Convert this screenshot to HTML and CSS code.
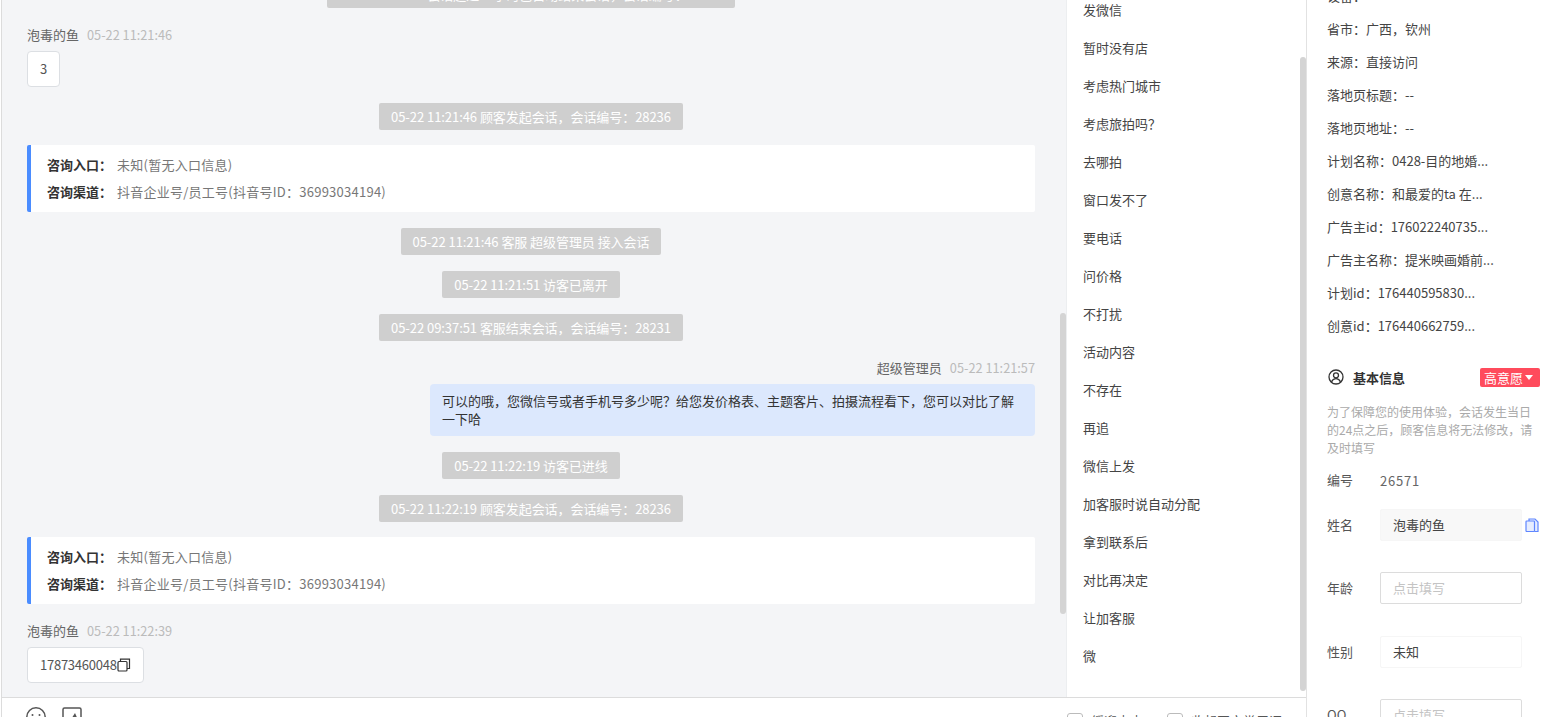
FILE: index.html
```html
<!DOCTYPE html>
<html lang="zh">
<head>
<meta charset="utf-8">
<title>客服会话</title>
<link rel="stylesheet" href="styles.css">
</head>
<body>
<div class="app">
  <main class="workspace">
    <div class="upper">
      <section class="chat">
        <div class="chat-flow">
          <div class="notice-row"><span class="chip">05-22 11:21:46 会话超过24小时已自动结束会话&#65292;会话编号&#65306;28236</span></div>
          <div class="msg">
            <div class="meta"><span class="who">泡毒的鱼</span><span class="when">05-22 11:21:46</span></div>
            <div class="bubble guest">3</div>
          </div>
          <div class="notice-row"><span class="chip">05-22 11:21:46 顾客发起会话&#65292;会话编号&#65306;28236</span></div>
          <div class="source">
            <p><b>咨询入口&#65306;</b><span class="val">未知(暂无入口信息)</span></p>
            <p><b>咨询渠道&#65306;</b><span class="val">抖音企业号/员工号(抖音号ID&#65306;36993034194)</span></p>
          </div>
          <div class="notice-row"><span class="chip">05-22 11:21:46 客服 超级管理员 接入会话</span></div>
          <div class="notice-row"><span class="chip">05-22 11:21:51 访客已离开</span></div>
          <div class="notice-row"><span class="chip">05-22 09:37:51 客服结束会话&#65292;会话编号&#65306;28231</span></div>
          <div class="msg mine">
            <div class="meta"><span class="who">超级管理员</span><span class="when">05-22 11:21:57</span></div>
            <div class="bubble agent">可以的哦&#65292;您微信号或者手机号多少呢&#65311;给您发价格表、主题客片、拍摄流程看下&#65292;您可以对比了解一下哈</div>
          </div>
          <div class="notice-row"><span class="chip">05-22 11:22:19 访客已进线</span></div>
          <div class="notice-row"><span class="chip">05-22 11:22:19 顾客发起会话&#65292;会话编号&#65306;28236</span></div>
          <div class="source">
            <p><b>咨询入口&#65306;</b><span class="val">未知(暂无入口信息)</span></p>
            <p><b>咨询渠道&#65306;</b><span class="val">抖音企业号/员工号(抖音号ID&#65306;36993034194)</span></p>
          </div>
          <div class="msg">
            <div class="meta"><span class="who">泡毒的鱼</span><span class="when">05-22 11:22:39</span></div>
            <div class="bubble guest phone">17873460048<svg class="copy-mini" viewBox="0 0 14 14" fill="none" stroke="#333" stroke-width="1.2"><rect x="1" y="3.5" width="9" height="9.5" rx="1"/><path d="M3.500 3.500V1.200h9v9.300H10"/></svg></div>
          </div>
        </div>
        <div class="thumb chat-thumb"></div>
      </section>
      <aside class="phrases">
        <ul class="phrase-list">
          <li>发微信</li><li>暂时没有店</li><li>考虑热门城市</li><li>考虑旅拍吗&#65311;</li><li>去哪拍</li><li>窗口发不了</li><li>要电话</li><li>问价格</li><li>不打扰</li><li>活动内容</li><li>不存在</li><li>再追</li><li>微信上发</li><li>加客服时说自动分配</li><li>拿到联系后</li><li>对比再决定</li><li>让加客服</li><li>微</li>
        </ul>
        <div class="thumb phrase-thumb"></div>
      </aside>
    </div>
    <footer class="composer">
      <div class="tools">
        <svg class="tool" viewBox="0 0 20 20" fill="none" stroke="#555" stroke-width="1.5"><circle cx="10" cy="10" r="9.200"/><circle cx="6.500" cy="8" r="1" fill="#555" stroke="none"/><circle cx="13.500" cy="8" r="1" fill="#555" stroke="none"/><path d="M5.500 12.500c2.500 3 6.500 3 9 0"/></svg>
        <svg class="tool" viewBox="0 0 20 20" fill="none" stroke="#555" stroke-width="1.5"><rect x="1" y="1" width="18" height="18" rx="1.500"/><path d="M4 15l4-5 1.500 1.500L13 6l4 9z" fill="#555" stroke="none"/></svg>
      </div>
      <div class="checks">
        <label class="check"><i></i>缓迎点击</label>
        <label class="check"><i></i>收起图文常用语</label>
      </div>
    </footer>
  </main>
  <aside class="profile">
    <div class="facts">
      <p>设备&#65306;</p>
      <p>省市&#65306;广西&#65292;钦州</p>
      <p>来源&#65306;直接访问</p>
      <p>落地页标题&#65306;--</p>
      <p>落地页地址&#65306;--</p>
      <p>计划名称&#65306;0428-目的地婚...</p>
      <p>创意名称&#65306;和最爱的ta 在...</p>
      <p>广告主id&#65306;176022240735...</p>
      <p>广告主名称&#65306;提米映画婚前...</p>
      <p>计划id&#65306;176440595830...</p>
      <p>创意id&#65306;176440662759...</p>
    </div>
    <div class="basic-head">
      <svg class="user-icon" viewBox="0 0 16 16" fill="none" stroke="#333" stroke-width="1.300"><circle cx="8" cy="8" r="7"/><circle cx="8" cy="6.300" r="2.500"/><path d="M3.500 13c1-2.400 2.600-3.300 4.500-3.300s3.500.9 4.500 3.300"/></svg>
      <strong>基本信息</strong>
      <span class="badge">高意愿<i class="caret"></i></span>
    </div>
    <p class="tip">为了保障您的使用体验&#65292;会话发生当日的24点之后&#65292;顾客信息将无法修改&#65292;请及时填写</p>
    <div class="field plain"><label>编号</label><span class="serial">26571</span></div>
    <div class="field name"><label>姓名</label><div class="box filled">泡毒的鱼</div>
      <svg class="copy" viewBox="0 0 14 14" fill="#e6edff" stroke="#5f86ff" stroke-width="1.200"><path d="M4 3V1h6l3 3v9.500H9.500"/><rect x="1" y="3" width="8.500" height="10.500" rx=".8"/></svg>
    </div>
    <div class="field"><label>年龄</label><div class="box empty">点击填写</div></div>
    <div class="field gender"><label>性别</label><div class="box soft">未知</div></div>
    <div class="field"><label>QQ</label><div class="box empty">点击填写</div></div>
  </aside>
</div>
</body>
</html>
```

FILE: styles.css
```css
* { box-sizing: border-box; }
html, body { margin: 0; height: 100%; overflow: hidden; }
body {
  font-family: "Noto Sans CJK SC", "Noto Sans", sans-serif;
  font-size: 13px;
  color: #333;
  background: #fff;
}
p, ul { margin: 0; padding: 0; }
.app { display: flex; height: 717px; }
.workspace {
  width: 1306px;
  margin-left: 1px;
  display: flex;
  flex-direction: column;
  border-left: 1px solid #dcdcdc;
  border-right: 1px solid #e2e2e2;
}
.upper { height: 697px; display: flex; overflow: hidden; }

.chat {
  position: relative;
  width: 1065px;
  background: #f4f5f7;
  border-right: 1px solid #eceef0;
  overflow: hidden;
}
.chat-flow {
  height: 697px;
  display: flex;
  flex-direction: column;
  justify-content: flex-end;
  padding: 0 31px 14px 25px;
}
.notice-row { display: flex; justify-content: center; flex-shrink: 0; margin-bottom: 16px; }
.notice-row + .msg, .source + .msg { margin-top: 2px; }
.notice-row + .source { margin-top: -1px; }
.chip {
  height: 27px;
  line-height: 27px;
  padding: 0 12px;
  background: #cfcfcf;
  color: #fff;
  font-size: 13px;
  letter-spacing: -.06px;
  border-radius: 2px;
  white-space: nowrap;
}
.msg { flex-shrink: 0; margin-bottom: 16px; display: flex; flex-direction: column; align-items: flex-start; }
.msg:last-child { margin-bottom: 0; }
.msg.mine { align-items: flex-end; }
.meta { height: 18px; line-height: 18px; margin-bottom: 7px; white-space: nowrap; }
.who { color: #666; }
.when { color: #bbb; font-size: 12.750px; margin-left: 8px; }
.bubble { border-radius: 4px; font-size: 13px; }
.guest {
  height: 36px;
  line-height: 34px;
  padding: 0 12px;
  background: #fff;
  border: 1px solid #dcdfe3;
  color: #555;
}
.phone { display: flex; align-items: center; letter-spacing: -.25px; }
.copy-mini { width: 14px; height: 14px; }
.agent {
  width: 605px;
  padding: 8px 12px;
  line-height: 18px;
  background: #dce8fd;
  color: #333;
}
.source {
  flex-shrink: 0;
  height: 67px;
  margin-bottom: 16px;
  padding: 6px 16px;
  background: #fff;
  border-left: 4px solid #4a8cff;
  border-radius: 2px;
  color: #777;
}
.source p { height: 27px; line-height: 27px; white-space: nowrap; }
.source b { color: #333; font-weight: 700; margin-right: 5px; }
.val { letter-spacing: .25px; }

.thumb { position: absolute; width: 6px; background: #d4d4d4; border-radius: 3px; }
.chat-thumb { left: 1058px; top: 313px; height: 301px; }
.phrase-thumb { right: 0; top: 57px; height: 634px; }

.phrases { position: relative; flex: 1; background: #fff; overflow: hidden; }
.phrase-list { list-style: none; margin-top: -9px; padding-left: 16px; }
.phrase-list li { height: 38px; line-height: 38px; color: #444; white-space: nowrap; }

.composer {
  height: 20px;
  display: flex;
  justify-content: space-between;
  background: #fff;
  border-top: 1px solid #dcdcdc;
  overflow: hidden;
  padding: 9px 0 0 24px;
}
.tools { display: flex; gap: 16px; }
.tool { width: 20px; height: 20px; flex-shrink: 0; }
.checks { display: flex; gap: 24px; width: 239px; margin-top: 6px; }
.check { display: flex; gap: 8px; white-space: nowrap; color: #555; line-height: 16px; }
.check i { display: block; width: 16px; height: 16px; border: 1px solid #bbb; border-radius: 3px; flex-shrink: 0; }

.profile { flex: 1; background: #fff; padding: 0 10px 0 20px; overflow: hidden; }
.facts { margin-top: -21px; }
.facts p { height: 33px; line-height: 33px; color: #444; white-space: nowrap; }
.basic-head { display: flex; align-items: center; height: 20px; margin-top: 25px; }
.user-icon { width: 16px; height: 16px; margin-left: 1px; flex-shrink: 0; }
.basic-head strong { margin-left: 9px; font-weight: 700; color: #333; }
.badge {
  margin-left: auto;
  width: 60px;
  height: 19px;
  line-height: 19px;
  padding-left: 4px;
  background: #ff4b5c;
  color: #fff;
  border-radius: 2px;
  white-space: nowrap;
  display: flex;
  align-items: center;
  gap: 2px;
}
.caret { width: 0; height: 0; border: 4px solid transparent; border-top: 5px solid #fff; border-bottom: 0; }
.tip { margin-top: 16px; font-size: 12px; line-height: 18px; color: #aaa; width: 206px; }
.field { display: flex; align-items: center; height: 32px; margin-top: 31px; position: relative; }
.field label { width: 53px; flex-shrink: 0; color: #555; padding-bottom: 2px; }
.field.plain { height: 18px; margin-top: 14px; color: #666; }
.serial { letter-spacing: .8px; }
.field.name { margin-top: 20px; }
.field.gender { margin-top: 32px; }
.box { width: 142px; height: 32px; line-height: 30px; padding: 0 12px; border-radius: 2px; }
.filled { background: #f8f8f8; border: 1px solid #f6f6f6; color: #444; }
.empty { border: 1px solid #dcdcdc; color: #c4c4c4; }
.soft { border: 1px solid #f6f6f6; color: #444; }
.copy { width: 14px; height: 14px; margin-left: 3px; flex-shrink: 0; }
```
